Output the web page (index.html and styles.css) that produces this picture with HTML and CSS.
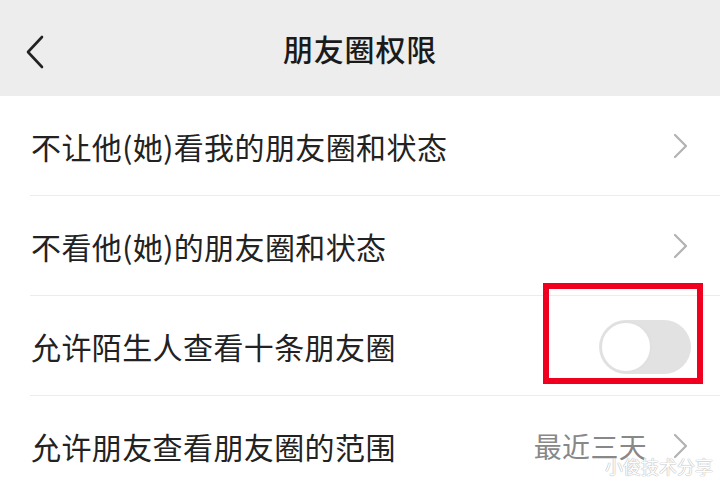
FILE: index.html
```html
<!DOCTYPE html>
<html lang="zh-CN">
<head>
    <meta charset="UTF-8">
    <meta name="viewport" content="width=device-width, initial-scale=1.0">
    <title>朋友圈权限</title>
    <link rel="stylesheet" href="styles.css">
</head>
<body>
    <div class="header">
        <svg class="back" width="20" height="34" viewBox="0 0 20 34">
            <polyline points="17,2 3,17 17,32" fill="none" stroke="#222" stroke-width="2.6" stroke-linecap="round" stroke-linejoin="round"/>
        </svg>
        <h1>朋友圈权限</h1>
    </div>

    <div class="list">
        <div class="item">
            <div class="item-inner">
                <span class="label">不让他(她)看我的朋友圈和状态</span>
                <svg class="arrow" width="16" height="26" viewBox="0 0 16 26">
                    <polyline points="2,2 13,13 2,24" fill="none" stroke="#b2b2b2" stroke-width="2.2" stroke-linecap="round" stroke-linejoin="round"/>
                </svg>
            </div>
        </div>
        <div class="item">
            <div class="item-inner">
                <span class="label">不看他(她)的朋友圈和状态</span>
                <svg class="arrow" width="16" height="26" viewBox="0 0 16 26">
                    <polyline points="2,2 13,13 2,24" fill="none" stroke="#b2b2b2" stroke-width="2.2" stroke-linecap="round" stroke-linejoin="round"/>
                </svg>
            </div>
        </div>
        <div class="item">
            <div class="item-inner switch-row">
                <span class="label">允许陌生人查看十条朋友圈</span>
                <div class="switch">
                    <div class="knob"></div>
                    <div class="mark"></div>
                </div>
            </div>
        </div>
        <div class="item">
            <div class="item-inner">
                <span class="label">允许朋友查看朋友圈的范围</span>
                <span class="value">最近三天</span>
                <svg class="arrow" width="16" height="26" viewBox="0 0 16 26">
                    <polyline points="2,2 13,13 2,24" fill="none" stroke="#b2b2b2" stroke-width="2.2" stroke-linecap="round" stroke-linejoin="round"/>
                </svg>
            </div>
        </div>
    </div>

    <div class="watermark">小俊技术分享</div>
</body>
</html>
```

FILE: styles.css
```css
body {
    margin: 0;
    padding: 0;
    font-family: "Noto Sans CJK SC", "Noto Sans", sans-serif;
    color: #1a1a1a;
    background-color: #fff;
    overflow: hidden;
}
.header {
    height: 96px;
    background-color: #ededed;
    display: flex;
    align-items: center;
    justify-content: center;
    position: relative;
}
.header .back {
    position: absolute;
    left: 25px;
    top: 35px;
}
.header h1 {
    margin: 0;
    font-size: 30px;
    font-weight: 500;
    letter-spacing: 0.8px;
}
.item {
    padding-left: 30px;
}
.item-inner {
    height: 99px;
    display: flex;
    align-items: center;
    border-bottom: 1px solid #ececec;
    padding-right: 31px;
}
.label {
    flex: 1;
    font-size: 30px;
    letter-spacing: 0.4px;
    padding-left: 1px;
    color: #222;
}
.value {
    font-size: 28px;
    color: #888;
    margin-right: 26px;
    letter-spacing: 0.3px;
}
.arrow {
    display: block;
}
.switch-row {
    padding-right: 29px;
}
.switch {
    width: 92px;
    height: 54px;
    border-radius: 27px;
    background-color: #e2e2e2;
    position: relative;
    margin-top: 2px;
}
.knob {
    width: 48px;
    height: 48px;
    border-radius: 50%;
    background-color: #fff;
    border: 2px solid #e0e0e0;
    position: absolute;
    left: 1px;
    top: 1px;
}
.mark {
    position: absolute;
    left: -56px;
    top: -37px;
    width: 148px;
    height: 89px;
    border: 6px solid #f0001e;
}
.watermark {
    position: absolute;
    right: 7px;
    bottom: 8px;
    font-size: 18px;
    color: #fff;
    text-shadow: 0 0 1px #aaa, 0 0 1px #aaa;
}
```
